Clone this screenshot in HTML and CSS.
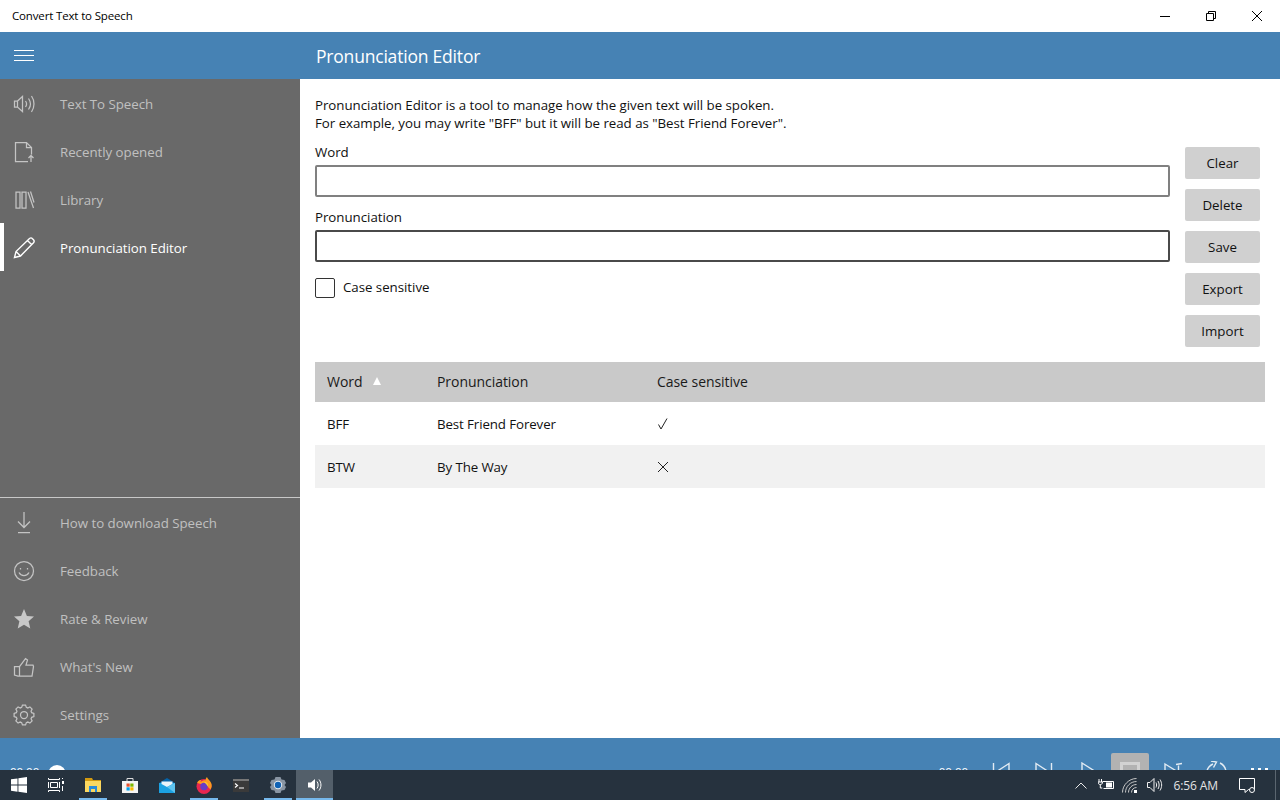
FILE: index.html
```html
<!DOCTYPE html>
<html lang="en">
<head>
<meta charset="utf-8">
<title>Convert Text to Speech</title>
<link rel="stylesheet" href="styles.css">
</head>
<body>
<div class="app">
  <div class="titlebar">
    <span class="app-name">Convert Text to Speech</span>
    <div class="win-controls">
      <svg class="win-btn" viewBox="0 0 46 32"><path d="M18 16.500h10" stroke="#000" fill="none"/></svg>
      <svg class="win-btn" viewBox="0 0 46 32"><path d="M18.500 13.500h7v7h-7zM20.500 13.500v-2h7v7h-2" stroke="#000" fill="none"/></svg>
      <svg class="win-btn" viewBox="0 0 46 32"><path d="M18 11l10 10M28 11L18 21" stroke="#000" fill="none"/></svg>
    </div>
  </div>
  <header class="appbar">
    <div class="hamburger"><svg width="20" height="12" viewBox="0 0 20 12"><path d="M0 .5h20M0 5.500h20M0 10.500h20" stroke="#fff" fill="none"/></svg></div>
    <h1 class="page-title">Pronunciation Editor</h1>
  </header>
  <div class="main">
    <nav class="sidebar">
      <div class="nav-group">
        <div class="nav-item">
          <span class="nav-icon"><svg width="22" height="22" viewBox="0 0 22 22"><path d="M1.500 8h3l5-4.500v15l-5-4.500h-3zM4.500 8v6M12.500 8c1.300 1.800 1.300 4.200 0 6M15.500 5.500c2.400 3.300 2.400 7.700 0 11M18.500 3c3.300 4.800 3.300 11.200 0 16"/></svg></span>
          <span>Text To Speech</span>
        </div>
        <div class="nav-item">
          <span class="nav-icon"><svg width="22" height="22" viewBox="0 0 22 22"><path d="M15 20.500H2.500V1.500h11l5 5v7M13.500 1.500v5h5M18 21v-6M15.500 17l2.500-2.500 2.500 2.500"/></svg></span>
          <span>Recently opened</span>
        </div>
        <div class="nav-item">
          <span class="nav-icon"><svg width="22" height="22" viewBox="0 0 22 22"><path d="M3 3h4v16H3zM9 3h4v16H9zM15 3l5.500 16M17.500 2.500l3.500 11"/></svg></span>
          <span>Library</span>
        </div>
        <div class="nav-item active">
          <span class="nav-icon"><svg width="22" height="22" viewBox="0 0 22 22"><path d="M1.500 20.500l1.500-6L16.500 1.500c1-.8 2.200-.7 3 .2l1 1c.8.900.8 2.100 0 3L7.500 19zM3 14.500l4.500 4.500M14.500 3.500l4.500 4.500"/></svg></span>
          <span>Pronunciation Editor</span>
        </div>
      </div>
      <div class="nav-group nav-footer">
        <div class="nav-item">
          <span class="nav-icon"><svg width="22" height="22" viewBox="0 0 22 22"><path d="M11 0v15M5 9.500l6 6 6-6M5 20.500h12"/></svg></span>
          <span>How to download Speech</span>
        </div>
        <div class="nav-item">
          <span class="nav-icon"><svg width="22" height="22" viewBox="0 0 22 22"><circle cx="11" cy="11" r="9.500"/><path d="M6 12.500c2 4 8 4 10 0M7.500 8v1.500M14.500 8v1.500"/></svg></span>
          <span>Feedback</span>
        </div>
        <div class="nav-item">
          <span class="nav-icon"><svg width="22" height="22" viewBox="0 0 22 22"><path class="solid" d="M11 1l2.900 6.900 7.100.6-5.400 4.800 1.700 7.200L11 16.700l-6.300 3.800 1.700-7.200L1 8.500l7.100-.6z"/></svg></span>
          <span>Rate &amp; Review</span>
        </div>
        <div class="nav-item">
          <span class="nav-icon"><svg width="22" height="22" viewBox="0 0 22 22"><path d="M1.500 10.500h5l6-8 2 1.500-1.500 5h7l.5 1.500-1.500 9.500H5l-3.500-1zM6.500 10.500v9"/></svg></span>
          <span>What's New</span>
        </div>
        <div class="nav-item">
          <span class="nav-icon"><svg width="22" height="22" viewBox="0 0 22 22"><circle cx="11" cy="11" r="3.500"/><path d="M8.660 3.350L9.440 1.120H12.560L13.340 3.350L14.760 3.940L16.880 2.910L19.090 5.120L18.060 7.240L18.650 8.660L20.880 9.440V12.560L18.650 13.340L18.060 14.760L19.090 16.880L16.880 19.090L14.760 18.060L13.340 18.650L12.560 20.880H9.440L8.660 18.650L7.240 18.060L5.120 19.090L2.910 16.880L3.940 14.760L3.350 13.340L1.120 12.560V9.440L3.350 8.660L3.940 7.240L2.910 5.120L5.120 2.910L7.240 3.940z"/></svg></span>
          <span>Settings</span>
        </div>
      </div>
    </nav>
    <main class="content">
      <p class="intro">Pronunciation Editor is a tool to manage how the given text will be spoken.<br>For example, you may write "BFF" but it will be read as "Best Friend Forever".</p>
      <div class="editor">
        <div class="fields">
          <label class="field-label">Word</label>
          <div class="text-input"></div>
          <label class="field-label second">Pronunciation</label>
          <div class="text-input strong"></div>
          <div class="check-row"><span class="checkbox"></span><span>Case sensitive</span></div>
        </div>
        <div class="actions">
          <button class="action">Clear</button>
          <button class="action">Delete</button>
          <button class="action">Save</button>
          <button class="action">Export</button>
          <button class="action">Import</button>
        </div>
      </div>
      <table class="words">
        <thead>
          <tr>
            <th class="col-word">Word<span class="sort"></span></th>
            <th class="col-pron">Pronunciation</th>
            <th>Case sensitive</th>
          </tr>
        </thead>
        <tbody>
          <tr><td>BFF</td><td>Best Friend Forever</td><td class="mark"><svg class="cross" width="12" height="12" viewBox="0 0 12 12"><path d="M1.500 6.500L4 11 10 .5" stroke="#222" fill="none"/></svg></td></tr>
          <tr class="alt"><td>BTW</td><td>By The Way</td><td><svg class="cross" width="12" height="12" viewBox="0 0 12 12"><path d="M1 1l10 10M11 1L1 11" stroke="#222" fill="none"/></svg></td></tr>
        </tbody>
      </table>
    </main>
  </div>
  <footer class="player">
    <div class="seek"><span class="time">00:00</span><span class="thumb"></span></div>
    <div class="transport">
      <span class="time end">00:00</span>
      <div class="controls">
        <span class="ctl"><svg width="20" height="20" viewBox="0 0 20 20"><path d="M2.500 1v18M18 1.500L5 10l13 8.500z"/></svg></span>
        <span class="ctl"><svg width="20" height="20" viewBox="0 0 20 20"><path d="M17.500 1v18M2 1.500L15 10 2 18.500z"/></svg></span>
        <span class="ctl"><svg width="20" height="20" viewBox="0 0 20 20"><path d="M5 1l14 9-14 9z"/></svg></span>
        <span class="ctl on"><svg width="20" height="20" viewBox="0 0 20 20"><path class="stop" d="M1.500 1.500h17v17h-17z"/></svg></span>
        <span class="ctl"><svg width="20" height="20" viewBox="0 0 20 20"><path d="M2 2l13 8-13 8zM15.500 3.500V18M13 2.500l6-1"/></svg></span>
        <span class="ctl"><svg width="22" height="22" viewBox="0 0 22 22"><path d="M8 3C1.500 6 0 13 3.500 18M15 2c6 3 8 10 3.500 16M8.500 6.500L11.500 1 6 0"/></svg></span>
        <span class="ctl"><svg width="20" height="20" viewBox="0 0 20 20"><path class="dots" d="M2 6h3v3H2zM9 6h3v3H9zM16 6h3v3h-3z"/></svg></span>
      </div>
    </div>
  </footer>
</div>
<div class="taskbar">
  <div class="task-left">
    <span class="task"><svg width="16" height="16" viewBox="0 0 16 16"><path fill="#fff" d="M0 2.300l6.500-.9v6.200H0zM7.400 1.300L16 0v7.600H7.400zM0 8.500h6.500v6.200L0 13.800zM7.400 8.500H16V16l-8.600-1.200z"/></svg></span>
    <span class="task"><svg width="16" height="14" viewBox="0 0 16 14"><path fill="none" stroke="#fff" d="M.5 0v1.500h11V0M2.500 4.500h7v5h-7zM.5 14v-1.500h11V14M.5 4v6M11.500 4v6"/><path fill="#fff" d="M14 3h2v3h-2zM14 0h1v1h-1zM14 8h1v5h-1z"/></svg></span>
    <span class="task open"><svg width="16" height="14" viewBox="0 0 16 14"><path fill="#d39a10" d="M0 0h7l1 2h8v2H0z"/><path fill="#fbd860" d="M0 3h16v11H0z"/><path fill="#2b8cd8" d="M4 8h8v6h-2v-3H6v3H4z"/></svg></span>
    <span class="task"><svg width="16" height="16" viewBox="0 0 16 16"><path fill="none" stroke="#ddd" d="M5 4V1.500h6V4"/><path fill="#f4f4f4" d="M0 4h16v12H0z"/><path fill="#e8502c" d="M4.500 6.500h3.200v3.200H4.500z"/><path fill="#7db800" d="M8.300 6.500h3.200v3.200H8.300z"/><path fill="#00a2ed" d="M4.500 10.300h3.200v3.200H4.500z"/><path fill="#fdb900" d="M8.300 10.300h3.200v3.200H8.300z"/></svg></span>
    <span class="task"><svg width="16" height="15" viewBox="0 0 16 15"><path fill="#0563a8" d="M0 5l8-5 8 5v2H0z"/><path fill="#1ba1e2" d="M0 5h16v10H0z"/><path fill="#e9f3fa" d="M2.500 3.500h11V6L8 9 2.500 6z"/><path fill="#5ec4f0" d="M8 9l8-4v10z"/></svg></span>
    <span class="task open"><svg width="16" height="17" viewBox="0 0 16 17"><circle cx="8" cy="9.500" r="7.500" fill="#e9264f"/><path fill="#ff9a1f" d="M1 6C2 3.500 4 3 5 3L4.500 5C7 3.500 8.500 3 9.500 3.500 9.500 1.500 10.500.5 11 0c.5 2 3.500 3.500 4.500 7 .5 2 0 4-1 5.500L10 8 5 7z"/><circle cx="8" cy="9.500" r="3.700" fill="#6a3cc4"/><path fill="#ffc730" d="M8 5c3-.5 4.500 2 4 4.500L10 7z"/></svg></span>
    <span class="task"><svg width="16" height="13" viewBox="0 0 16 13"><path fill="#3a3a3a" d="M0 0h16v13H0z"/><path fill="#777" d="M0 0h16v2H0z"/><path fill="none" stroke="#fff" stroke-width="1.200" d="M2 4.500l2.500 2L2 8.500"/><path fill="#fff" d="M6 8.500h5v1H6z"/></svg></span>
    <span class="task open"><svg width="16" height="16" viewBox="0 0 16 16"><path fill="#8995a3" d="M5.500 0h5l1 2.500 3 .5 1.500 3-1.500 2 1.500 2-1.500 3-3 .5-1 2.500h-5l-1-2.500-3-.5L0 10l1.500-2L0 6l1.500-3 3-.5z"/><circle cx="8" cy="8" r="4.200" fill="#e7edf2"/><circle cx="8" cy="8" r="3.200" fill="#0f62b5"/></svg></span>
    <span class="task open wide"><svg width="14" height="14" viewBox="0 0 14 14"><path fill="#fff" d="M0 4.500h3L7 1v12L3 9.500H0z"/><path fill="none" stroke="#fff" d="M9 3.500c1.500 2 1.500 5 0 7M11 1.500c2.600 3.200 2.600 7.800 0 11"/></svg></span>
  </div>
  <div class="tray">
    <svg class="tray-icon chevron" width="12" height="7" viewBox="0 0 12 7"><path fill="none" stroke="#e8e8e8" d="M.5 6.500L6 1l5.500 5.500"/></svg>
    <svg class="tray-icon battery" width="16" height="12" viewBox="0 0 16 12"><path fill="none" stroke="#fff" d="M1 0v3M3.500 0v3M0 3h4.500c0 2-1 2.500-2.200 2.500S0 5 0 3zM2.300 5.500V9h2M4.500 2.500h11v7h-10"/><path fill="#fff" d="M8 3.500h6v5H8z"/></svg>
    <svg class="tray-icon" width="15" height="15" viewBox="0 0 15 15"><path fill="none" stroke="#c8c8c8" d="M.5 14.500C.5 7 7 .5 14.500.5M3.500 14.500c0-6 5-11 11-11M6.500 14.500c0-4.400 3.600-8 8-8M9.500 14.500c0-2.800 2.200-5 5-5"/><path fill="#fff" d="M12 12h3v3h-3z"/></svg>
    <svg class="tray-icon" width="16" height="14" viewBox="0 0 16 14"><path fill="none" stroke="#f0f0f0" d="M.5 4.500h2.500l4-4v13l-4-4H.5zM9 4.500c.8 1.500.8 3.500 0 5M11 3c1.500 2.500 1.500 5.500 0 8M13 1.500c2.200 3.500 2.200 7.500 0 11"/></svg>
    <span class="clock">6:56 AM</span>
    <svg class="notify" width="16" height="15" viewBox="0 0 16 15"><path fill="none" stroke="#fff" d="M.5.500h15v11h-6L6 14.500v-3H.5z"/><circle cx="13" cy="12" r="2.500" fill="#26323e" stroke="#fff"/></svg>
    <span class="show-desktop"></span>
  </div>
</div>
</body>
</html>
```
FILE: styles.css
```css
* { box-sizing: border-box; }
html, body { margin: 0; height: 100%; overflow: hidden; }
body { font-family: "Open Sans", "Noto Sans", sans-serif; font-size: 13.300px; letter-spacing: -.03px; color: #1a1a1a; background: #fff; position: relative; }

.app { display: flex; flex-direction: column; height: 800px; overflow: hidden; }

.titlebar { height: 32px; flex: none; display: flex; align-items: center; justify-content: space-between; padding-left: 12px; background: #fff; }
.app-name { font-size: 11.500px; color: #000; letter-spacing: -.15px; margin-top: -2px; }
.win-controls { display: flex; }
.win-btn { width: 46px; height: 32px; display: block; }

.appbar { height: 47px; flex: none; display: flex; align-items: center; background: #4682b4; color: #fff; }
.hamburger { width: 316px; padding-left: 14px; display: flex; align-items: center; flex: none; }
.page-title { margin: 0; font-size: 17.500px; font-weight: 400; letter-spacing: -.2px; }

.main { flex: 1; display: flex; min-height: 0; }

.sidebar { width: 300px; flex: none; background: #696969; color: #c0c0c0; display: flex; flex-direction: column; justify-content: space-between; }
.nav-item { height: 48px; display: flex; align-items: center; gap: 11px; padding-left: 13px; padding-top: 2px; }
.nav-item.active { color: #fff; box-shadow: inset 4px 0 0 #fff; }
.nav-icon { width: 22px; height: 22px; margin-right: 14px; flex: none; display: block; }
.nav-icon svg { display: block; fill: none; stroke: #c4c4c4; stroke-width: 1.250; }
.nav-icon svg .solid { fill: #c8c8c8; stroke: none; }
.nav-item.active .nav-icon svg { stroke: #fff; stroke-width: 1.400; }
.nav-footer { border-top: 1px solid #c8c8c8; height: 241px; }

.content { flex: 1; min-width: 0; padding: 17px 15px 0; }
.intro { margin: 0; line-height: 18px; color: #111; }

.editor { display: flex; gap: 15px; padding-right: 5px; margin-top: 15px; }
.fields { flex: 1; min-width: 0; }
.field-label { display: block; height: 18px; line-height: 10px; color: #111; }
.second { margin-top: 15px; }
.text-input { height: 32px; border: 2px solid #808080; border-radius: 2px; background: #fff; }
.text-input.strong { border-color: #4a4a4a; }
.check-row { display: flex; align-items: flex-start; gap: 8px; margin-top: 16px; line-height: 18px; color: #111; }
.checkbox { width: 20px; height: 20px; border: 1px solid #333; border-radius: 2px; background: #fff; flex: none; }

.actions { width: 75px; flex: none; display: flex; flex-direction: column; gap: 10px; }
.action { height: 32px; border: 0; border-radius: 2px; background: #d0d0d0; color: #111; padding: 0; font: inherit; }

.words { width: 950px; margin-top: 15px; border-collapse: collapse; table-layout: fixed; }
.words th { height: 40px; background: #c9c9c9; font-weight: 400; text-align: left; padding: 0 12px 2px; font-size: 14px; letter-spacing: -.05px; color: #1a1a1a; }
.col-word { width: 110px; }
.col-pron { width: 220px; }
.sort { display: inline-block; width: 0; height: 0; margin-left: 11px; vertical-align: 2px; border-left: 4.500px solid transparent; border-right: 4.500px solid transparent; border-bottom: 8px solid #fff; }
.words td { height: 43px; padding: 0 12px; letter-spacing: -.1px; color: #111; }
.words tr.alt td { background: #f1f1f1; }
.cross { display: block; }

.player { height: 62px; flex: none; background: #4682b4; color: #fff; display: flex; justify-content: space-between; padding-left: 10px; padding-right: 2px; }
.seek { display: flex; align-items: flex-start; gap: 9px; padding-top: 26px; }
.thumb { width: 18px; height: 18px; border-radius: 50%; background: #fff; display: block; margin-top: 1px; }
.time { font-size: 11.500px; line-height: 16px; color: #fff; }
.transport { display: flex; align-items: flex-start; }
.time.end { margin-top: 26px; margin-right: 14px; }
.controls { display: flex; gap: 5px; padding-top: 15px; }
.ctl { width: 38px; height: 38px; display: flex; align-items: center; justify-content: center; border-radius: 2px; }
.ctl svg { fill: none; stroke: #e2ebf3; stroke-width: 1.400; display: block; }
.ctl.on { background: #b2b2b2; }
.ctl .stop { stroke: #d2d2d2; stroke-width: 3; }
.ctl .dots { fill: #fff; stroke: none; }

.taskbar { position: absolute; left: 0; right: 0; bottom: 0; height: 30px; background: #26323e; display: flex; justify-content: space-between; align-items: stretch; }
.task-left { display: flex; }
.task { width: 37px; display: flex; align-items: center; justify-content: center; position: relative; }
.task.open::after { content: ""; position: absolute; left: 4.500px; right: 4.500px; bottom: 0; height: 2px; background: #76b9ed; }
.task.wide { background: #535f6a; }
.task.wide::after { left: 0; right: 0; }
.tray { display: flex; align-items: center; }
.tray-icon { display: block; margin-right: 10px; }
.tray-icon.chevron { margin-right: 11px; }
.tray-icon.battery { margin-right: 8px; }
.clock { font-size: 12px; color: #e4e4e4; letter-spacing: -.1px; }
.notify { display: block; margin-left: 21px; }
.show-desktop { width: 1px; height: 100%; background: #5b6670; margin-left: 20px; margin-right: 4px; }
```
